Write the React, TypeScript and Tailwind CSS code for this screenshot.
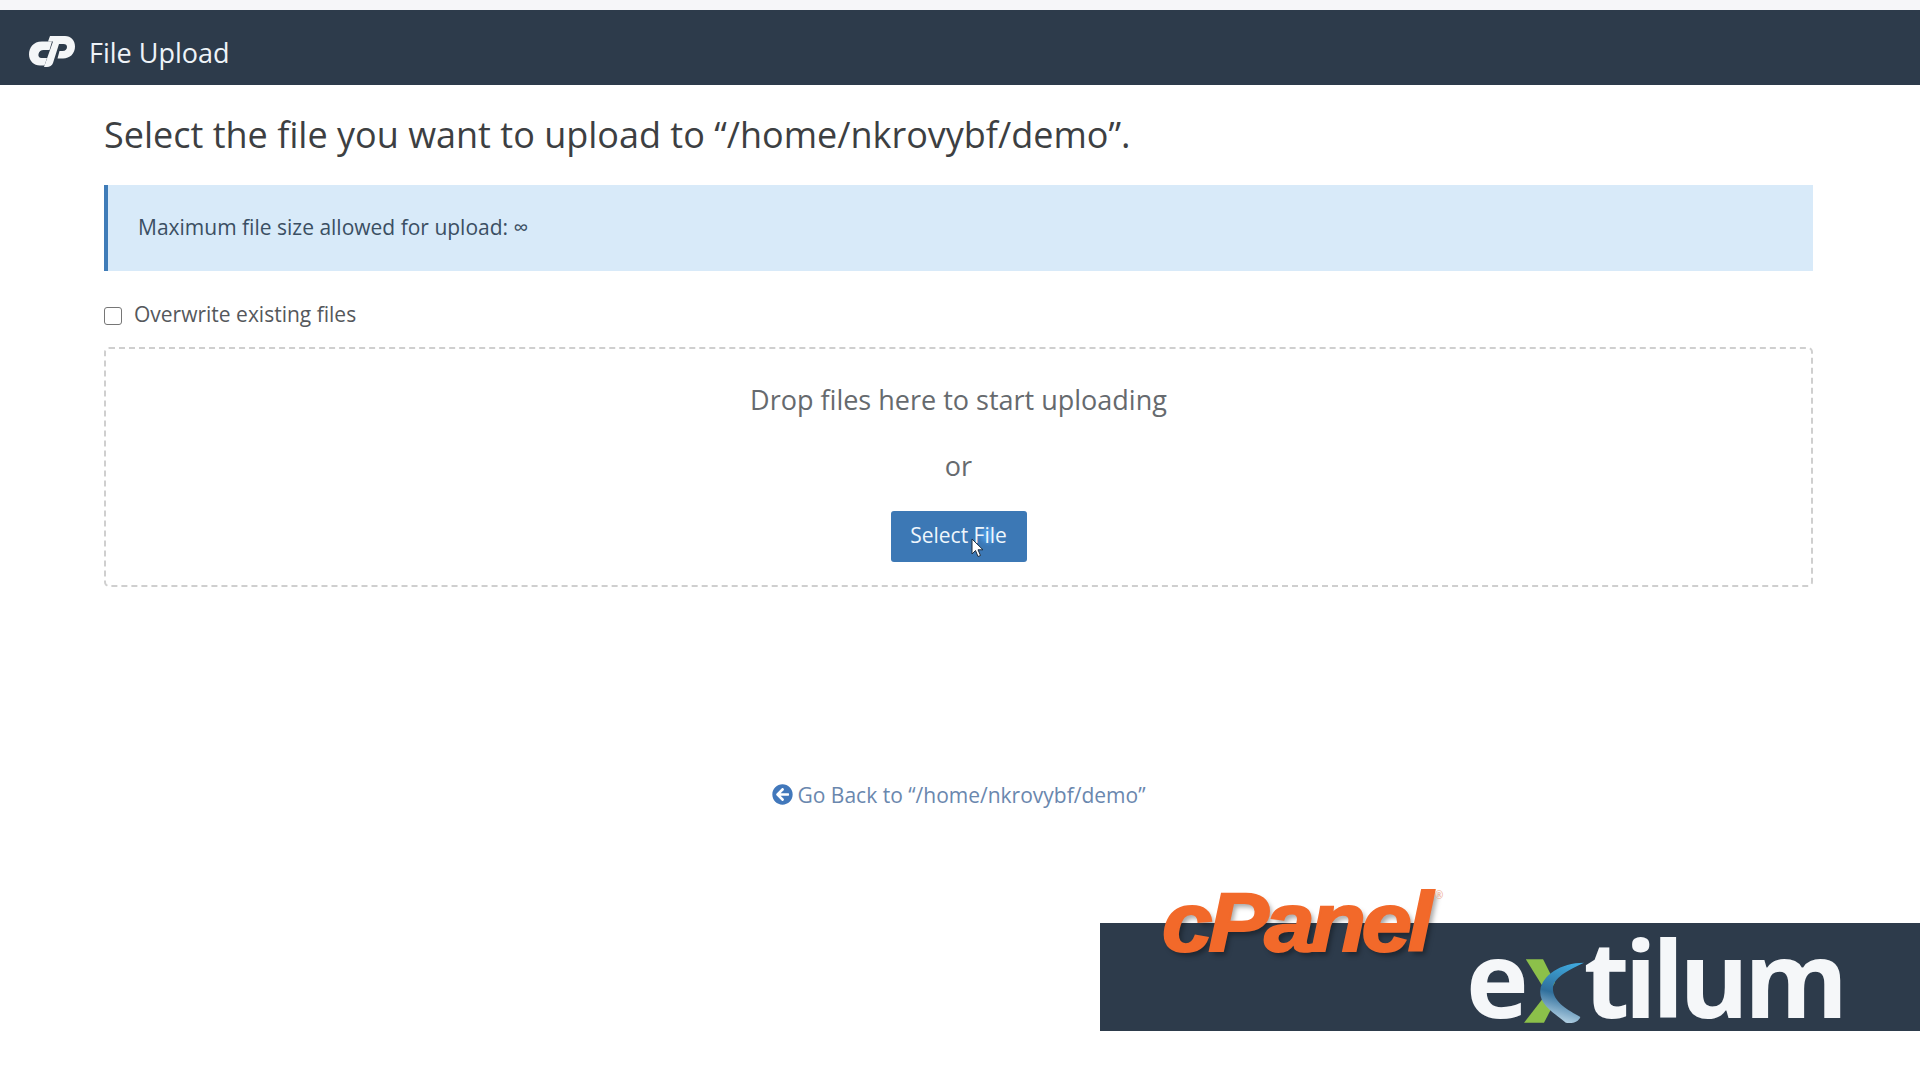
import { FaArrowCircleLeft } from "react-icons/fa";

function CpMark() {
  return (
    <svg viewBox="0 0 46 31" className="h-[31px] w-[46px] translate-y-[2px]" fill="#f4f6f8">
      <path d="M23 5.500 L13 5.500 C4 5.500 0 12 0 18.500 C0 25 5 29.500 11 29.500 L15.500 29.500 L18 22 L12.500 22 C10 22 9 20 9.500 18 C10 15.500 12 14 14.500 14 L20.500 14 Z" />
      <path d="M21 0 L36 0 C42 0 46 4.500 46 10.500 C46 17.500 41 22.500 34 22.500 L28.500 22.500 L30.500 15 L33.500 15 C36.500 15 38 13 38 11 C38 9 36.800 8 34.500 8 L30 8 L24 27 C23.200 29.500 20.500 31 18 31 L15 31 L24 5.500 L19 5.500 Z" />
    </svg>
  );
}

function Cursor() {
  return (
    <svg viewBox="0 0 14 20" className="absolute left-[80px] top-[27px] h-[20px] w-[14px]">
      <path d="M1 1 L1 16 L4.500 12.500 L7 18.500 L9.500 17.500 L7 11.800 L12 11.800 Z" fill="#ffffff" stroke="#1f2d3d" strokeWidth="1" />
    </svg>
  );
}

function ExtilumX() {
  return (
    <svg viewBox="0 0 66 112" preserveAspectRatio="none" className="mb-[3px] h-[66px] w-[60px] shrink-0">
      <defs>
        <linearGradient id="boom" x1="0.7" y1="0" x2="0.5" y2="1">
          <stop offset="0" stopColor="#3fa9de" />
          <stop offset="0.55" stopColor="#2f6f9c" />
          <stop offset="1" stopColor="#b8d4e6" />
        </linearGradient>
      </defs>
      <path d="M2 2 L21 2 L34 42 L26 62 Z" fill="#8cc04a" />
      <path d="M26 58 L34 74 L22 110 L0 110 Z" fill="#8cc04a" />
      <path d="M66 8 C46 22 30 36 32 56 C34 76 48 88 62 100 C60 108 54 112 46 110 C32 92 16 78 18 54 C20 30 40 8 66 8 Z" fill="url(#boom)" />
    </svg>
  );
}

export default function App() {
  return (
    <div className="flex min-h-[1080px] flex-col bg-white font-['Open_Sans',sans-serif] text-[#333]">
      <div className="h-[10px] bg-[#f6f6f9]" />
      <header className="flex h-[75px] items-center gap-[14px] bg-[#2d3b4b] pl-[29px] pt-[4px]">
        <CpMark />
        <span className="pt-[5px] text-[27px] leading-none text-[#eef3f8]">File Upload</span>
      </header>

      <main className="mx-[104px] mr-[107px] flex flex-col">
        <h1 className="mt-[25px] text-[36px] leading-[50px] font-normal text-[#3d3f42]">
          Select the file you want to upload to “/home/nkrovybf/demo”.
        </h1>
        <div className="mt-[25px] flex h-[86px] items-center border-l-[4px] border-[#3f7cb8] bg-[#d8eaf9] pl-[30px] text-[21px] text-[#3b4f63]">
          Maximum file size allowed for upload: ∞
        </div>
        <label className="mt-[30px] flex h-[28px] items-center gap-[12px] text-[21px] text-[#55585c]">
          <input type="checkbox" className="h-[18px] w-[18px] translate-y-[1px] appearance-none rounded-[3px] border border-[#767676] bg-white" />
          Overwrite existing files
        </label>
        <div className="mt-[18px] flex h-[240px] flex-col items-center rounded-[5px] border-2 border-dashed border-[#cfcfcf]">
          <div className="mt-[32px] text-[27px] leading-[38px] text-[#666a6e]">Drop files here to start uploading</div>
          <div className="mt-[28px] text-[27px] leading-[38px] text-[#666a6e]">or</div>
          <button className="relative mt-[25.5px] h-[51px] w-[136px] rounded-[3px] bg-[#3c78b5] text-[21px] text-[#eef6fc]">
            <span className="absolute left-[90px] top-[16px] h-[16px] w-[14px] rounded-full bg-[#4a96de] blur-[2px]" />
            <span className="relative">Select File</span>
            <Cursor />
          </button>
        </div>
        <a className="mt-[193px] flex items-center justify-center gap-[5px] text-[21px] leading-[30px] text-[#6a87ae]">
          <FaArrowCircleLeft className="h-[21px] w-[21px] -translate-y-[1px] text-[#4278bb]" />
          Go Back to “/home/nkrovybf/demo”
        </a>
      </main>

      <div className="relative ml-[1100px] mt-[113px] flex h-[108px] items-start justify-end bg-[#2d3b4b] pr-[77px] pt-[4px]">
        <span className="absolute left-[62px] top-[-51px] origin-left scale-x-[1.08] font-['Liberation_Sans',sans-serif] text-[84px] leading-[100px] font-bold italic tracking-[-4px] text-[#f2692a] [-webkit-text-stroke:2px_#f2692a] [text-shadow:3px_4px_5px_rgba(0,0,0,0.35)]">
          cPanel
        </span>
        <span className="absolute left-[335px] top-[-33px] text-[10px] leading-none text-[#f0a98a]">®</span>
        <div className="flex items-end font-['Open_Sans',sans-serif] text-[106px] leading-[100px] font-bold tracking-[-5px] text-[#f5f7f9]">
          <span>e</span>
          <ExtilumX />
          <span>tilum</span>
        </div>
      </div>
    </div>
  );
}
